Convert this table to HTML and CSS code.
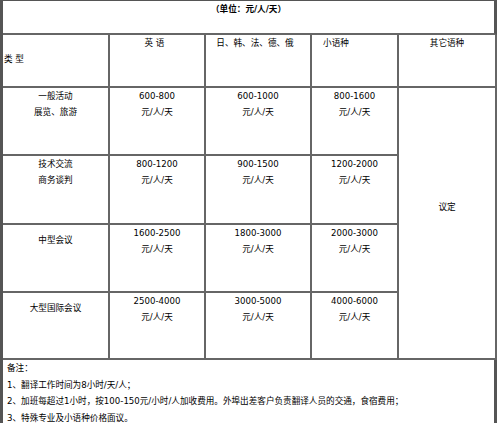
FILE: index.html
```html
<!DOCTYPE html>
<html lang="zh">
<head>
<meta charset="utf-8">
<title>价格表</title>
<link rel="stylesheet" href="styles.css">
</head>
<body>
<table class="price">
  <colgroup>
    <col class="c1"><col class="c2"><col class="c3"><col class="c4"><col class="c5">
  </colgroup>
  <tr class="r-title">
    <td colspan="5" class="title">（单位：元/人/天）</td>
  </tr>
  <tr class="r-head">
    <td class="type">类 型</td>
    <td class="head h-en">英 语</td>
    <td class="head h-jp">日、韩、法、德、俄</td>
    <td class="head h-small">小语种</td>
    <td class="head">其它语种</td>
  </tr>
  <tr class="r1">
    <td class="cell">一般活动<br>展览、旅游</td>
    <td class="cell">600-800<br>元/人/天</td>
    <td class="cell">600-1000<br>元/人/天</td>
    <td class="cell">800-1600<br>元/人/天</td>
    <td rowspan="4" class="agree">议定</td>
  </tr>
  <tr class="r2">
    <td class="cell">技术交流<br>商务谈判</td>
    <td class="cell">800-1200<br>元/人/天</td>
    <td class="cell">900-1500<br>元/人/天</td>
    <td class="cell">1200-2000<br>元/人/天</td>
  </tr>
  <tr class="r3">
    <td class="cell single">中型会议</td>
    <td class="cell">1600-2500<br>元/人/天</td>
    <td class="cell">1800-3000<br>元/人/天</td>
    <td class="cell">2000-3000<br>元/人/天</td>
  </tr>
  <tr class="r4">
    <td class="cell single">大型国际会议</td>
    <td class="cell">2500-4000<br>元/人/天</td>
    <td class="cell">3000-5000<br>元/人/天</td>
    <td class="cell">4000-6000<br>元/人/天</td>
  </tr>
  <tr class="r-notes">
    <td colspan="5" class="notes">备注：<br>1、翻译工作时间为8小时/天/人；<br>2、加班每超过1小时，按100-150元/小时/人加收费用。外埠出差客户负责翻译人员的交通，食宿费用；<br>3、特殊专业及小语种价格面议。</td>
  </tr>
</table>
</body>
</html>
```
FILE: styles.css
```css
html, body {
  margin: 0;
  padding: 0;
  background: #fff;
}
body {
  font-family: "DejaVu Sans", "Noto Sans CJK SC", sans-serif;
  font-size: 8.6px;
  color: #000;
}
.price {
  table-layout: fixed;
  border-collapse: separate;
  border-spacing: 0;
  width: 497px;
  border-left: 3px solid #555;
  border-top: 1px solid #555;
}
.c1 { width: 107px; }
.c2 { width: 96px; }
.c3 { width: 106px; }
.c4 { width: 87px; }
.c5 { width: 98px; }
.price td {
  box-sizing: border-box;
  border-right: 2px solid #666;
  border-bottom: 2px solid #666;
  padding: 0;
  line-height: 15px;
  text-align: center;
  vertical-align: top;
}
.r-title { height: 34px; }
.r-head { height: 53px; }
.r1 { height: 68px; }
.r2 { height: 69px; }
.r3 { height: 68px; }
.r4 { height: 67px; }
.r-notes { height: 70px; }
.price td.title {
  font-weight: bold;
  padding-top: 1px;
  border-right-width: 3px;
  border-right-color: #555;
}
.price td.type {
  text-align: left;
  vertical-align: middle;
  padding-left: 1px;
  padding-bottom: 2px;
}
.price td.head {
  padding-top: 1px;
}
.price td.h-en { padding-right: 5px; }
.price td.h-jp { padding-right: 6px; }
.price td.h-small { padding-right: 37px; }
.price td.cell {
  padding-top: 1px;
  line-height: 15.5px;
}
.price td.single {
  padding-top: 8px;
}
.price td.agree {
  vertical-align: middle;
  padding-bottom: 32px;
}
.price td.notes {
  text-align: left;
  line-height: 16.7px;
  padding-left: 4px;
  padding-top: 0;
  border-right-width: 3px;
  border-right-color: #555;
}
```
